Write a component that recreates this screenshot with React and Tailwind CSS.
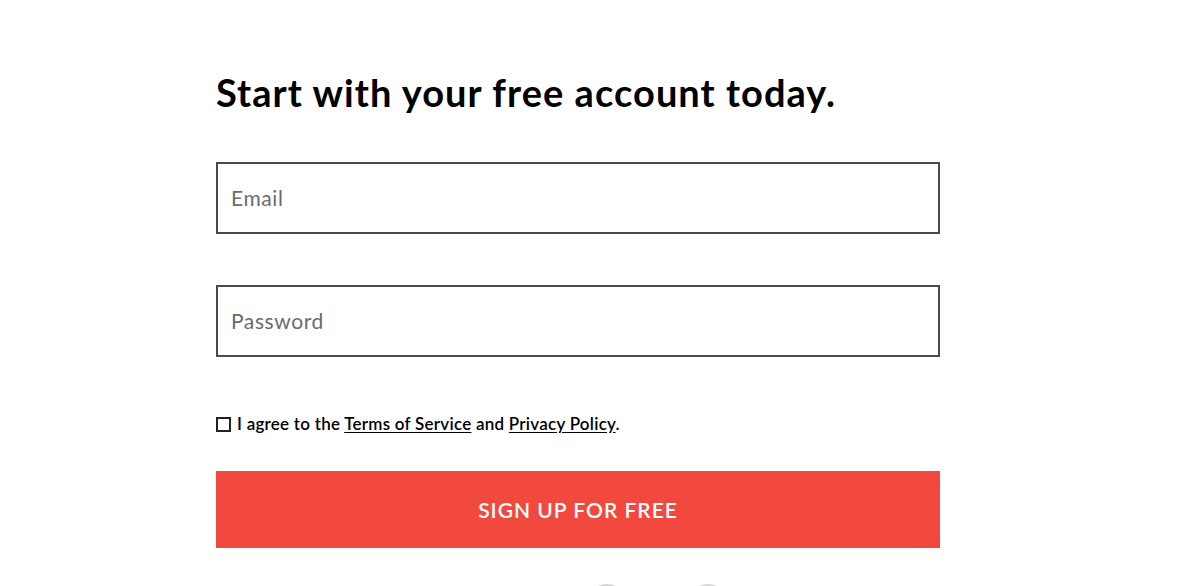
export default function App() {
  return (
    <div className="w-[1186px] h-[586px] overflow-hidden bg-white" style={{ fontFamily: 'Lato, "Open Sans", sans-serif' }}>
      <div className="ml-[216px] w-[724px] pt-[66px]">
        <h1 className="text-[38px] leading-[52px] font-bold text-black tracking-[1.05px]">Start with your free account today.</h1>
        <div className="mt-[44px] flex flex-col gap-[51px]">
          <div className="h-[72px] border-2 border-[#4a4a4a] flex items-center px-[13px]">
            <span className="text-[21px] tracking-[0.6px] text-[#6b6b6b]">Email</span>
          </div>
          <div className="h-[72px] border-2 border-[#4a4a4a] flex items-center px-[13px]">
            <span className="text-[21px] tracking-[0.6px] text-[#6b6b6b]">Password</span>
          </div>
        </div>
        <div className="mt-[59px] flex items-center h-[16px] text-[17px] font-semibold text-black tracking-[0.25px]">
          <span className="w-[15px] h-[15px] border-2 border-[#222] mr-[6px] shrink-0"></span>
          <span>I agree to the <span className="underline underline-offset-2">Terms of Service</span> and <span className="underline underline-offset-2">Privacy Policy</span>.</span>
        </div>
        <div className="mt-[39px] h-[77px] bg-[#f2493f] flex items-center justify-center text-white text-[21px] font-semibold tracking-[1px]">
          SIGN UP FOR FREE
        </div>
        <div className="mt-[36px] flex gap-[61px] ml-[371px]">
          <span className="w-[40px] h-[40px] rounded-full border-2 border-[#d6d6d6]"></span>
          <span className="w-[40px] h-[40px] rounded-full border-2 border-[#d6d6d6]"></span>
        </div>
      </div>
    </div>
  );
}
